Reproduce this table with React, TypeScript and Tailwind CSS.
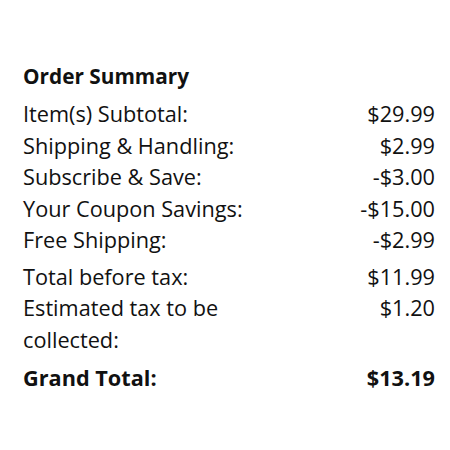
import { FC } from 'react'

interface Line {
  label: string
  value: string
}

const items: Line[] = [
  { label: 'Item(s) Subtotal:', value: '$29.99' },
  { label: 'Shipping & Handling:', value: '$2.99' },
  { label: 'Subscribe & Save:', value: '-$3.00' },
  { label: 'Your Coupon Savings:', value: '-$15.00' },
  { label: 'Free Shipping:', value: '-$2.99' },
]

const Row: FC<Line> = ({ label, value }) => (
  <div className="flex justify-between">
    <span>{label}</span>
    <span>{value}</span>
  </div>
)

const App: FC = () => {
  return (
    <div
      className="w-[450px] h-[450px] bg-white text-[#111] pl-[23px] pr-[15px] pt-[60px] text-[21.7px] leading-[31.5px]"
      style={{ fontFamily: '"Open Sans", "Noto Sans", sans-serif' }}
    >
      <h2 className="font-bold text-[20.8px] leading-[32px] mb-[6px]">Order Summary</h2>
      {items.map((i) => (
        <Row key={i.label} {...i} />
      ))}
      <div className="mt-[5px]">
        <Row label="Total before tax:" value="$11.99" />
        <div className="flex justify-between">
          <span className="w-[220px]">Estimated tax to be collected:</span>
          <span>$1.20</span>
        </div>
      </div>
      <div className="flex justify-between font-bold mt-[7px]">
        <span>Grand Total:</span>
        <span>$13.19</span>
      </div>
    </div>
  )
}

export default App
